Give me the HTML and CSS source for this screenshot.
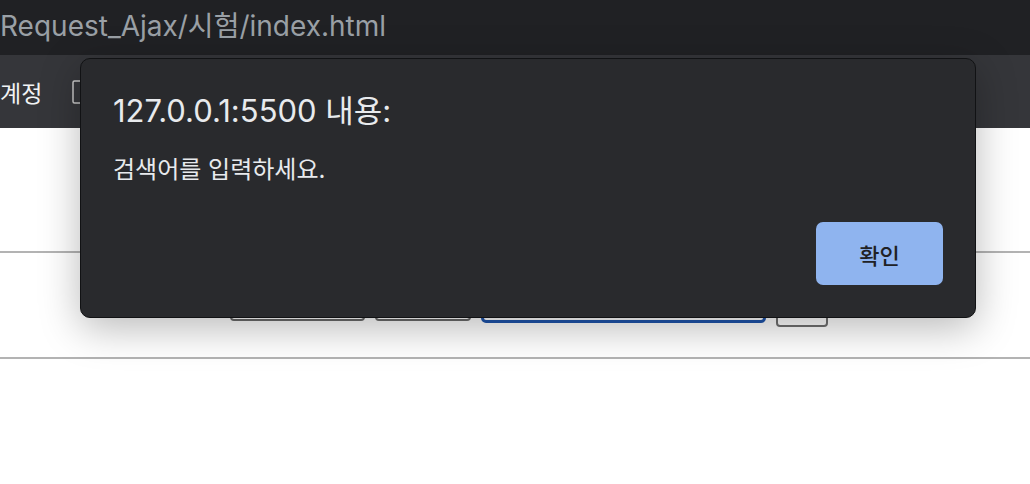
FILE: index.html
```html
<!DOCTYPE html>
<html lang="ko">
<head>
<meta charset="utf-8">
<title>Request_Ajax</title>
<link rel="stylesheet" href="styles.css">
</head>
<body>
  <div class="titlebar"><span class="path">Request_Ajax/시험/index.html</span></div>
  <div class="bookmarks">
    <span class="bm-text">계정</span>
    <svg class="bm-icon" width="16" height="24" viewBox="0 0 16 24"><rect x="1" y="1" width="14" height="22" rx="1.5" fill="none" stroke="#c8c8c8" stroke-width="1.5"/></svg>
  </div>
  <main class="page">
    <div class="rule"></div>
    <div class="row">
      <div class="field f1"></div>
      <div class="field f2"></div>
      <div class="field f3"></div>
      <div class="field f4"></div>
    </div>
    <div class="rule"></div>
  </main>

  <div class="dialog" role="alertdialog">
    <div class="d-title">127.0.0.1:5500 내용:</div>
    <div class="d-msg">검색어를 입력하세요.</div>
    <div class="d-actions"><button class="d-ok">확인</button></div>
  </div>
</body>
</html>
```
FILE: styles.css
```css
html, body {
  margin: 0;
  padding: 0;
}
body {
  width: 1030px;
  height: 484px;
  overflow: hidden;
  background: #ffffff;
  font-family: "Inter", "Noto Sans CJK KR", sans-serif;
  position: relative;
}
.titlebar {
  height: 55px;
  background: #202124;
  display: flex;
  align-items: center;
}
.path {
  color: #9aa0a6;
  font-size: 28px;
  line-height: 34px;
  margin-top: -3px;
}
.bookmarks {
  height: 73px;
  background: #35363a;
  display: flex;
  align-items: center;
  gap: 30px;
}
.bm-text {
  color: #f1f3f4;
  font-size: 23px;
  margin-left: 0;
}
.bm-icon {
  display: block;
}
.page {
  padding-top: 123px;
}
.rule {
  height: 2px;
  background: #b3b3b3;
}
.row {
  height: 104px;
  display: flex;
  align-items: center;
  padding-left: 230px;
  gap: 10px;
}
.field {
  height: 30px;
  box-sizing: border-box;
  border: 2px solid #6b6b6b;
  border-radius: 4px;
  margin-top: 2px;
}
.f1 { width: 135px; }
.f2 { width: 96px; }
.f3 { width: 285px; border: 3px solid #1f55ad; border-radius: 5px; height: 32px; margin-top: 3px; }
.f4 { width: 52px; height: 36px; margin-top: 8px; border-color: #707070; }

.dialog {
  position: absolute;
  left: 80px;
  top: 58px;
  width: 896px;
  height: 260px;
  box-sizing: border-box;
  background: #292a2d;
  border: 1px solid #111214;
  border-radius: 10px;
  box-shadow: 0 10px 40px rgba(0, 0, 0, 0.28);
  padding: 0 32px 32px 32px;
  display: flex;
  flex-direction: column;
}
.d-title {
  color: #e8eaed;
  font-size: 31px;
  margin-top: 34px;
  line-height: 36px;
}
.d-msg {
  color: #e8eaed;
  font-size: 24px;
  margin-top: 26px;
  line-height: 30px;
}
.d-actions {
  margin-top: auto;
  display: flex;
  justify-content: flex-end;
}
.d-ok {
  width: 127px;
  height: 63px;
  border: 0;
  border-radius: 7px;
  background: #8fb4ef;
  color: #202124;
  font-family: "Noto Sans CJK KR", sans-serif;
  font-size: 22px;
  font-weight: 500;
  padding: 0;
}
```
